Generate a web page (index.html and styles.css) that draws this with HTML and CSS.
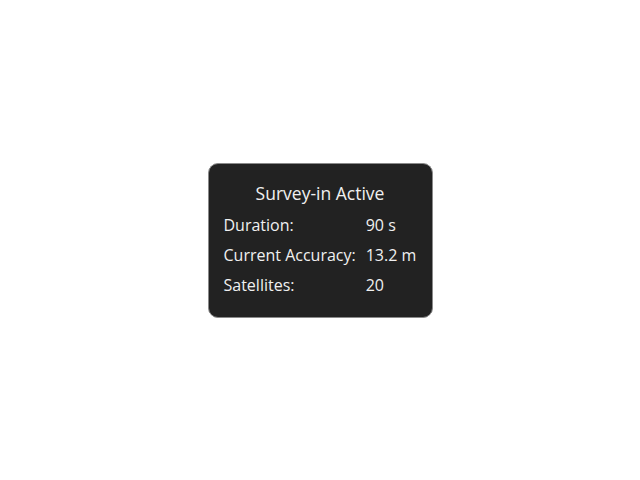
FILE: index.html
```html
<!DOCTYPE html>
<html>
<head>
<meta charset="utf-8">
<link rel="stylesheet" href="styles.css">
</head>
<body>
<div class="panel">
  <div class="title">Survey-in Active</div>
  <div class="grid">
    <div class="label">Duration:</div><div class="value">90 s</div>
    <div class="label">Current Accuracy:</div><div class="value">13.2 m</div>
    <div class="label">Satellites:</div><div class="value">20</div>
  </div>
</div>
</body>
</html>
```
FILE: styles.css
```css
html, body {
  margin: 0;
  height: 100%;
  background: #ffffff;
}
body {
  display: flex;
  align-items: center;
  justify-content: center;
  font-family: "Open Sans", sans-serif;
}
.panel {
  width: 193px;
  background: #222222;
  border: 1px solid #8a8a8a;
  border-radius: 10px;
  padding: 14px 15px 17px 15px;
  color: #f0f0f0;
}
.title {
  text-align: center;
  font-size: 17.5px;
  line-height: 30px;
  margin-bottom: 2px;
}
.grid {
  display: grid;
  grid-template-columns: auto 1fr;
  column-gap: 10px;
  font-size: 16px;
  line-height: 30px;
  white-space: nowrap;
}
```
